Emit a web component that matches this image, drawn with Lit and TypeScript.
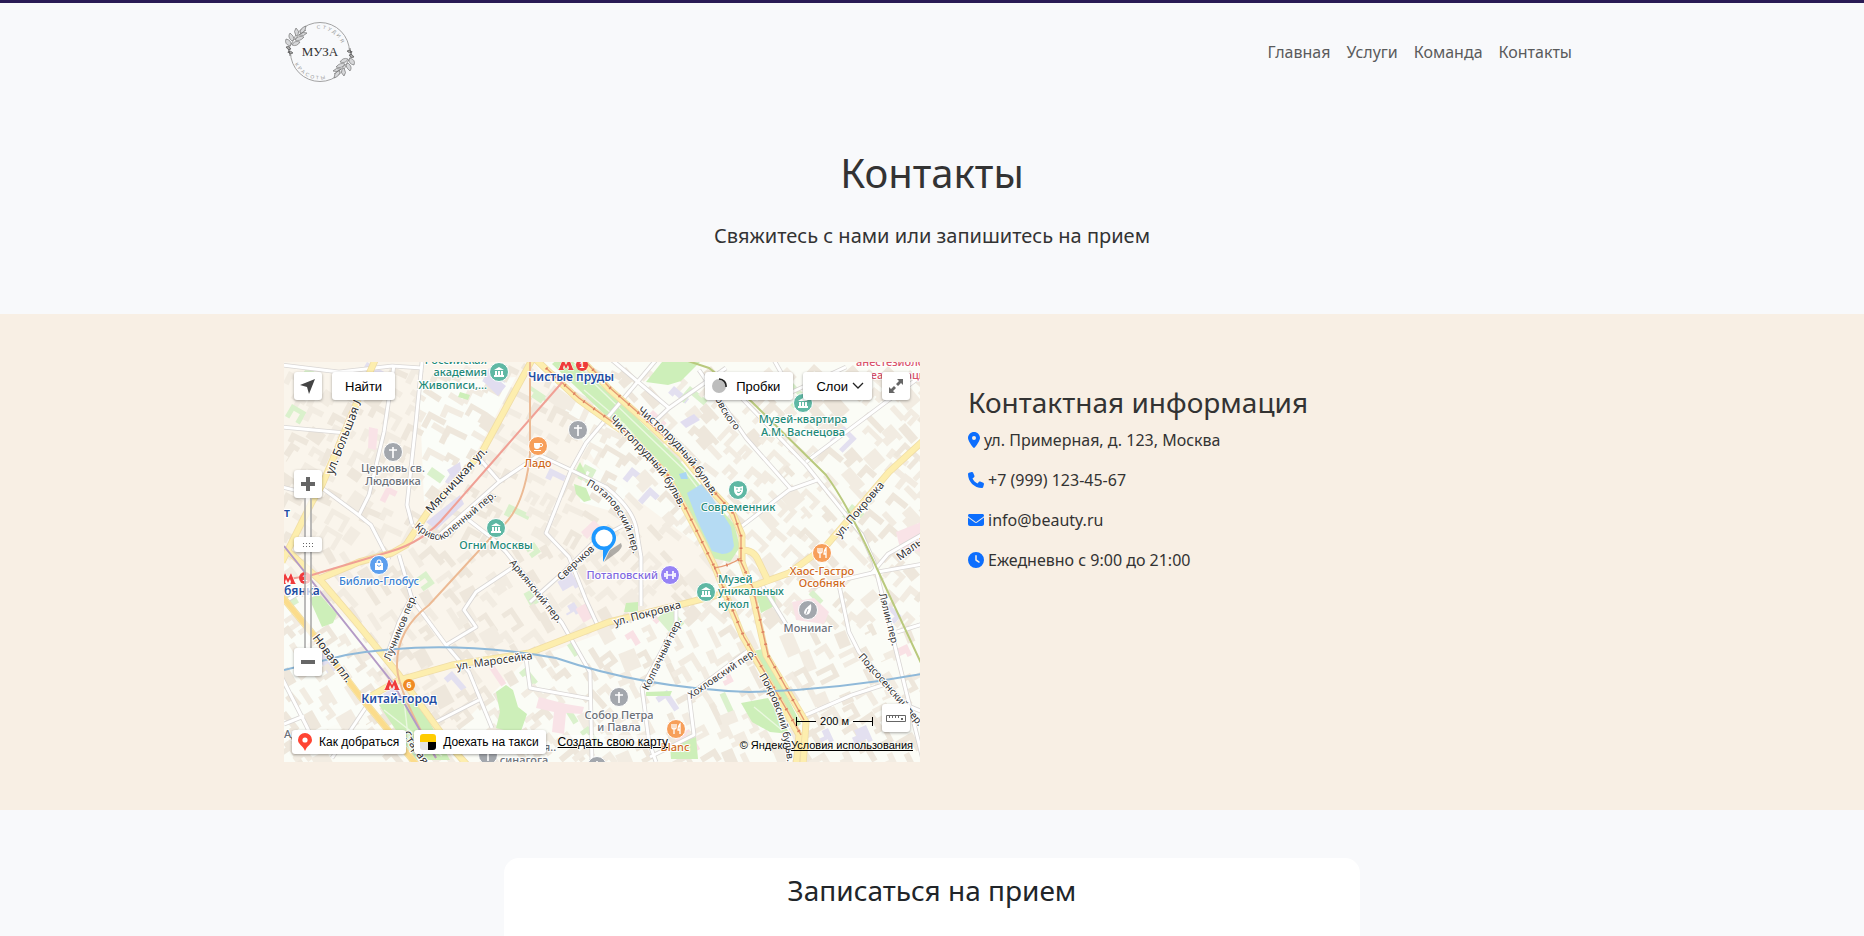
import { LitElement, html, svg, css } from "lit";
import { customElement } from "lit/decorators.js";

type Poi = {
  x: number;
  y: number;
  kind: string;
  color: string;
  ink: string;
  anchor: string;
  lines: { x: number; y: number; text: string }[];
};

const TEAL = "#5fb8a4";
const TEAL_INK = "#1f8a78";
const ORANGE = "#f79f5a";
const ORANGE_INK = "#cf6a1c";
const GREY = "#a3a7ad";
const GREY_INK = "#6b7078";

const AVENUES = [
  "M92 -4 L73 40 L38 123 L28 140 L-2 200",
  "M249 -4 L198 90 L145 148 L122 183 L108 191 L75 200 L35 217",
  "M-4 232 L32 276 L75 333 L132 402",
  "M5 190 L38 220 L72 260 L115 313 L168 386 L184 404",
  "M82 337 L115 318 L168 303 L245 291 L325 260 L395 243 L472 223 L505 211 L542 184 L605 110 L640 78",
  "M248 -6 L295 38 L348 76 L382 112 L398 141 L415 173 L430 203 L458 273 L502 350 L515 373 L512 404",
  "M292 -8 L325 27 L358 56 L398 93 L425 126 L448 150 L458 173 L458 200 L467 226 L482 293 L522 360 L519 404",
  "M458 188 Q470 188 474 198 L485 221",
];

const TRAMS = [
  "M262 6 L295 36 L348 74 L382 110 L400 143 L430 204 L460 275 L504 350 L517 373",
  "M300 -2 L325 25 L358 54 L398 91 L425 124 L450 152 L457 174 L457 200 L469 226 L484 293 L520 358",
  "M430 206 Q445 204 457 196",
];

const STREETS = [
  "M138 0 L132 60 L123 143 L128 162",
  "M110 3 L100 70 L85 133 L75 153",
  "M-2 3 L55 10 L108 4 L138 6",
  "M-2 65 L62 71",
  "M38 126 L72 151 L87 163 L105 198",
  "M-2 125 L34 134",
  "M128 163 L152 176 L215 120 L255 93 L287 108 L322 125 Q348 146 352 165 L357 195 L357 244",
  "M195 96 L215 119",
  "M182 156 L208 176 L222 190 L258 235 L278 261 L306 310 L308 400",
  "M372 -2 L302 81 L287 108 L262 171 L285 195 L302 238 L313 262",
  "M246 240 L282 208 L312 178 L342 162",
  "M115 193 L128 237 L162 283 L185 310 L208 366",
  "M162 283 L192 265 L180 248 L192 230 L228 206",
  "M242 296 L246 326 L307 337",
  "M102 296 L115 260 L128 234",
  "M328 -2 L385 46 L368 62",
  "M442 6 L385 46",
  "M415 8 L462 76 L507 127",
  "M448 26 L522 103 L562 153 L578 173 L590 200 L605 260 L639 398",
  "M458 164 L505 128 L533 118",
  "M522 100 L602 40 L640 12",
  "M490 -2 L508 30 L562 5",
  "M528 225 L588 211 L639 202",
  "M588 211 L604 192 L639 172",
  "M555 223 L565 270 L575 290 L622 343 L639 350",
  "M613 270 L639 262",
  "M478 223 L502 262",
  "M515 356 L568 333 L605 321",
  "M392 243 L392 262 L358 326 L365 380 L372 400",
  "M465 288 L405 333 L410 373 L366 395",
  "M-2 316 L22 363 L30 380",
  "M48 396 L82 345",
  "M152 360 L195 338",
  "M0 240 L30 222",
  "M0 362 L20 354",
];

const PARKS = [
  "M280 -8 L315 22 L355 58 L395 98 L425 134 L450 162 L456 185 L446 200 L428 196 L400 142 L378 106 L345 72 L318 50 L268 2 Z",
  "M95 343 L122 333 L142 353 L166 398 L132 398 Z",
  "M25 236 L36 233 L53 252 L49 261 L38 265 Z",
  "M469 289 L479 287 L517 362 L511 366 Z",
  "M457 341 L484 336 L506 372 L486 370 L468 360 Z",
  "M212 330 L222 323 L229 328 L234 345 L243 352 L236 372 L212 366 L216 350 Z",
  "M362 20 L378 0 L416 0 L397 19 L384 23 Z",
  "M472 231 L489 226 L492 243 L477 251 Z",
  "M386 384 L412 375 L414 397 L387 397 Z",
  "M290 122 L302 126 L307 138 L300 140 L292 132 Z",
  "M292 108 L296 100 L302 112 L300 116 Z",
  "M362 330 L388 329 L386 334 L362 334 Z",
  "M342 241 L354 240 L354 250 L340 250 Z",
  "M176 30 L186 33 L184 38 L174 35 Z",
];

const STREET_NAMES = [
  { id: "s1", d: "M49 113 L84 24", text: "ул. Большая Лу", size: 12 },
  { id: "s2", d: "M147 152 L216 76", text: "Мясницкая ул.", size: 12 },
  { id: "s3", d: "M130 165 Q150 184 163 175 L232 118", text: "Кривоколенный пер.", size: 10 },
  { id: "s4", d: "M325 58 L366 100 Q388 125 408 172", text: "Чистопрудный бульв.", size: 11 },
  { id: "s5", d: "M353 50 Q402 86 444 160", text: "Чистопрудный бульв.", size: 11 },
  { id: "s6", d: "M422 20 L440 54 L474 98", text: "Жуковского", size: 10 },
  { id: "s7", d: "M302 123 Q344 144 352 210", text: "Потаповский пер.", size: 10 },
  { id: "s8", d: "M277 219 L330 170", text: "Сверчков", size: 10 },
  { id: "s9", d: "M225 201 L288 279", text: "Армянский пер.", size: 10 },
  { id: "s10", d: "M106 299 L142 211", text: "Лучников пер.", size: 10 },
  { id: "s11", d: "M173 308 L270 294", text: "ул. Маросейка", size: 11 },
  { id: "s12", d: "M331 264 L420 240", text: "ул. Покровка", size: 11 },
  { id: "s13", d: "M556 176 L618 103", text: "ул. Покровка", size: 11 },
  { id: "s14", d: "M616 199 L670 158", text: "Малый", size: 11 },
  { id: "s15", d: "M28 276 L76 339", text: "Новая пл.", size: 12 },
  { id: "s16", d: "M364 329 L406 242", text: "Колпачный пер.", size: 10 },
  { id: "s17", d: "M407 337 L490 280", text: "Хохловский пер.", size: 10 },
  { id: "s18", d: "M475 314 Q502 356 505 420", text: "Покровский бульв.", size: 10 },
  { id: "s19", d: "M574 295 L626 354 L650 384", text: "Подсосенский пер.", size: 10 },
  { id: "s20", d: "M595 232 L614 308", text: "Лялин пер.", size: 10 },
  { id: "s21", d: "M118 372 L156 428", text: "Старая", size: 11 },
];

const POIS: Poi[] = [
  { x: 215, y: 10, kind: "museum", color: TEAL, ink: TEAL_INK, anchor: "end", lines: [
    { x: 203, y: 2, text: "Российская" }, { x: 203, y: 14, text: "академия" }, { x: 203, y: 27, text: "Живописи,..." } ] },
  { x: 254, y: 84, kind: "cafe", color: ORANGE, ink: ORANGE_INK, anchor: "middle", lines: [{ x: 254, y: 105, text: "Ладо" }] },
  { x: 294, y: 68, kind: "cross", color: GREY, ink: GREY_INK, anchor: "middle", lines: [] },
  { x: 109, y: 90, kind: "cross", color: GREY, ink: GREY_INK, anchor: "middle", lines: [
    { x: 109, y: 110, text: "Церковь св." }, { x: 109, y: 123, text: "Людовика" } ] },
  { x: 212, y: 166, kind: "museum", color: TEAL, ink: TEAL_INK, anchor: "middle", lines: [{ x: 212, y: 187, text: "Огни Москвы" }] },
  { x: 454, y: 128, kind: "mask", color: TEAL, ink: TEAL_INK, anchor: "middle", lines: [{ x: 454, y: 149, text: "Современник" }] },
  { x: 519, y: 41, kind: "museum", color: TEAL, ink: TEAL_INK, anchor: "middle", lines: [
    { x: 519, y: 61, text: "Музей-квартира" }, { x: 519, y: 74, text: "А.М. Васнецова" } ] },
  { x: 95, y: 203, kind: "bag", color: "#5c9fee", ink: "#3a7fd0", anchor: "middle", lines: [{ x: 95, y: 223, text: "Библио-Глобус" }] },
  { x: 386, y: 213, kind: "gym", color: "#9683f5", ink: "#8169e0", anchor: "end", lines: [{ x: 374, y: 217, text: "Потаповский" }] },
  { x: 422, y: 230, kind: "museum", color: TEAL, ink: TEAL_INK, anchor: "start", lines: [
    { x: 434, y: 221, text: "Музей" }, { x: 434, y: 233, text: "уникальных" }, { x: 434, y: 246, text: "кукол" } ] },
  { x: 538, y: 191, kind: "food", color: ORANGE, ink: ORANGE_INK, anchor: "middle", lines: [
    { x: 538, y: 213, text: "Хаос-Гастро" }, { x: 538, y: 225, text: "Особняк" } ] },
  { x: 524, y: 248, kind: "drop", color: GREY, ink: GREY_INK, anchor: "middle", lines: [{ x: 524, y: 270, text: "Монииаг" }] },
  { x: 335, y: 335, kind: "cross", color: GREY, ink: GREY_INK, anchor: "middle", lines: [
    { x: 335, y: 357, text: "Собор Петра" }, { x: 335, y: 369, text: "и Павла" } ] },
  { x: 392, y: 367, kind: "food", color: ORANGE, ink: ORANGE_INK, anchor: "middle", lines: [{ x: 391, y: 389, text: "Blanc" }] },
  { x: 204, y: 393, kind: "cross", color: GREY, ink: GREY_INK, anchor: "middle", lines: [
    { x: 240, y: 389, text: "Хоральная.." }, { x: 240, y: 402, text: "синагога" } ] },
  { x: 313, y: 404, kind: "cross", color: GREY, ink: GREY_INK, anchor: "middle", lines: [] },
];

const glyph = (kind: string) => {
  switch (kind) {
    case "museum":
      return svg`<path d="M-5 -2 L0 -5 L5 -2 Z M-4 -1 H-2 V3 H-4 Z M-1 -1 H1 V3 H-1 Z M2 -1 H4 V3 H2 Z M-5 3 H5 V5 H-5 Z" fill="#fff"/>`;
    case "cross":
      return svg`<path d="M0 -5 V6 M-4 -2 H4" stroke="#fff" stroke-width="1.6" fill="none"/>`;
    case "cafe":
      return svg`<path d="M-4 -3 H2 V0 Q2 3 -1 3 Q-4 3 -4 0 Z M-4 4 H3 V5 H-4 Z" fill="#fff"/><circle cx="3" cy="-1" r="1.6" stroke="#fff" fill="none"/>`;
    case "food":
      return svg`<path d="M-4 -5 V-1 Q-4 0 -2 0 V5 M0 -5 V-1 Q0 0 -2 0 M-2 -5 V0 M4 5 V-5 Q2 -3 2 1 H4" stroke="#fff" stroke-width="1.3" fill="none"/>`;
    case "bag":
      return svg`<path d="M-4 -2 H4 V5 H-4 Z" fill="#fff"/><path d="M-2 -2 Q-2 -5 0 -5 Q2 -5 2 -2" stroke="#fff" stroke-width="1.2" fill="none"/><path d="M-2 0 Q0 3 2 0" stroke="#5c9fee" fill="none"/>`;
    case "gym":
      return svg`<path d="M-5 -2 V2 M-3 -4 V4 M3 -4 V4 M5 -2 V2 M-3 0 H3" stroke="#fff" stroke-width="1.7" fill="none"/>`;
    case "mask":
      return svg`<path d="M-4 -4 Q0 -2 5 -4 V1 Q4 5 0 6 Q-4 4 -4 0 Z" fill="#fff"/><path d="M-2 -1 H0 M2 -1 H4 M-1 2 Q1 4 3 1" stroke="#5fb8a4" fill="none"/>`;
    default:
      return svg`<path d="M3 -6 Q4 0 1 4 Q-3 6 -4 3 Q-4 -1 3 -6 Z" fill="#fff"/><path d="M0 -1 L-2 4" stroke="#a3a7ad"/>`;
  }
};

/* Building footprints scattered on a loose grid, turned with the street pattern. */
const buildFootprints = () => {
  let seed = 20417;
  const rnd = () => {
    seed = (seed * 1103515245 + 12345) % 2147483648;
    return seed / 2147483648;
  };
  const out: { x: number; y: number; r: number; d: string; fill: string }[] = [];
  for (let gy = 0; gy < 410; gy += 20) {
    for (let gx = 0; gx < 650; gx += 20) {
      const keep = rnd();
      const x = Math.round(gx + rnd() * 11);
      const y = Math.round(gy + rnd() * 11);
      const w = Math.round(11 + rnd() * 13);
      const h = Math.round(9 + rnd() * 11);
      const t = rnd();
      const tone = rnd();
      if (keep < 0.06) continue;
      const base = x < 330 ? (y < 180 ? 30 : 55) : y < 250 ? 44 : 62;
      const d =
        t < 0.35
          ? `M0 0H${w}V6H6V${h}H0Z`
          : t < 0.6
            ? `M0 0H${w}V${h}H${w - 5}V5H5V${h}H0Z`
            : t < 0.75
              ? `M0 0H${w}V6H0Z`
              : t < 0.88
                ? `M0 0H${w}V5H${w - 4}V${h}H6V${h - 5}H0Z`
                : `M0 0H${w}V${h - 2}H0Z`;
      const fill = tone < 0.03 ? "#e3e0f0" : tone < 0.045 ? "#f9e1e5" : tone < 0.07 ? "#daf1cc" : tone < 0.5 ? "#eee7dc" : "#f2ece2";
      out.push({ x, y, r: base + Math.round((t - 0.5) * 12), d, fill });
    }
  }
  return out;
};
const FOOTPRINTS = buildFootprints();

const metro = (x: number, y: number) =>
  svg`<path transform="translate(${x} ${y})" d="M-8 5 L-7 4 L-3 -6 L0 0 L3 -6 L7 4 L8 5 H2 L3 3 L2 0 L0 4 L-2 0 L-3 3 L-2 5 Z" fill="#ef3b3b" stroke="#fff" stroke-width="1" paint-order="stroke"/>`;

@customElement("city-map")
export class CityMap extends LitElement {
  static styles = css`
    :host {
      display: block;
      position: relative;
      height: 400px;
      overflow: hidden;
      font-family: "Liberation Sans", Arial, sans-serif;
      color: #000;
    }
    .canvas {
      display: block;
      width: 100%;
      height: 100%;
    }
    .street {
      font-family: "Noto Sans", sans-serif;
      fill: #333;
      stroke: #fff;
      stroke-width: 2px;
      paint-order: stroke;
    }
    .place {
      font-family: "Noto Sans", sans-serif;
      font-size: 11px;
      font-weight: 500;
      stroke: #fff;
      stroke-width: 2px;
      paint-order: stroke;
    }
    .station {
      font-family: "Noto Sans", sans-serif;
      font-size: 12px;
      font-weight: 600;
      fill: #1f4ea3;
      stroke: #fff;
      stroke-width: 2px;
      paint-order: stroke;
    }
    .line-number {
      font-size: 9px;
      font-weight: 700;
      fill: #fff;
    }
    .overlay {
      position: absolute;
      inset: 0;
      display: flex;
      flex-direction: column;
      padding: 10px 10px 8px;
    }
    .bar {
      display: flex;
      justify-content: space-between;
    }
    .group {
      display: flex;
      gap: 10px;
    }
    button {
      display: flex;
      align-items: center;
      justify-content: center;
      height: 28px;
      margin: 0;
      padding: 0 13px;
      border: 0;
      border-radius: 3px;
      background: #fff;
      box-shadow: 0 1px 3px rgba(0, 0, 0, 0.35);
      font: 13px "Liberation Sans", Arial, sans-serif;
      color: #000;
      cursor: pointer;
      white-space: nowrap;
    }
    .square {
      width: 28px;
      padding: 0;
    }
    .traffic {
      gap: 9px;
      padding: 0 13px 0 6px;
    }
    .layers {
      gap: 4px;
      padding: 0 8px 0 13px;
    }
    .zoom {
      display: flex;
      flex-direction: column;
      align-items: center;
      width: 28px;
      height: 206px;
      margin-top: 70px;
    }
    .track {
      display: flex;
      justify-content: center;
      align-items: flex-start;
      flex: 1;
      width: 8px;
      padding-top: 39px;
      box-sizing: border-box;
      border: solid rgba(120, 120, 120, 0.5);
      border-width: 0 2px;
      background: rgba(255, 255, 255, 0.7);
    }
    .handle {
      flex: none;
      width: 28px;
      height: 15px;
      padding: 0;
    }
    .bottom {
      position: absolute;
      left: 8px;
      right: 7px;
      bottom: 8px;
      display: flex;
      align-items: center;
      justify-content: space-between;
    }
    .actions {
      display: flex;
      align-items: center;
      gap: 8px;
    }
    .actions button {
      height: 24px;
      gap: 7px;
      padding: 0 7px 0 6px;
      font-size: 12px;
    }
    a {
      color: #000;
    }
    .own {
      margin-left: 4px;
      font-size: 12px;
      line-height: 14px;
      background: rgba(255, 255, 255, 0.5);
    }
    .legal {
      padding-top: 6px;
      font-size: 11px;
      line-height: 13px;
    }
    .measure {
      position: absolute;
      right: 10px;
      bottom: 30px;
      display: flex;
      align-items: center;
      gap: 9px;
    }
    .scale {
      display: flex;
      align-items: center;
      gap: 4px;
      margin-top: 6px;
      font-size: 11px;
      line-height: 12px;
    }
  `;

  render() {
    return html`
      <svg class="canvas" viewBox="0 0 636 400" preserveAspectRatio="xMidYMid slice" role="img" aria-label="Карта">
        <rect width="636" height="400" fill="#fbfcf6" />
        <path d="M0 0H250L330 130L250 290L120 310L0 200Z" fill="#faf5ec" />
        <path d="M150 200L330 120L450 210L400 240L240 300L160 380L90 320Z" fill="#faf5ec" />
        <path d="M135 20L232 15L190 95L140 140Z M300 95L345 130L330 150L296 140Z M0 235L50 290L90 350L0 380Z" fill="#fbfdf8" />
        ${FOOTPRINTS.map(
          (b) => svg`<path d=${b.d} fill=${b.fill} transform="translate(${b.x} ${b.y}) rotate(${b.r})"/>`,
        )}
        <path d="M142 160L176 133L180 142L152 168Z M205 10L222 24L214 34L200 20Z M163 108L176 100L178 112L168 116Z M396 60L410 52L416 58L402 66Z" fill="#e1ddf0" />
        <path d="M508 240L530 236L545 250L540 262L512 258Z M255 335L282 342L300 345L298 352L282 351L280 372L268 370L270 350L252 346Z M612 170L637 160V190L616 186Z M85 65L94 67L92 88L84 86Z M297 170L310 158L316 164L303 177Z" fill="#f9e3e7" />
        ${PARKS.map((d) => svg`<path d=${d} fill="#cdefb9"/>`)}
        <path d="M290 2L350 60L400 108L432 150L446 188 M300 28L340 62L390 118 M100 348L158 394 M120 338L126 392 M470 345L498 368" fill="none" stroke="#eaf8df" stroke-width="1.4" />
        <path d="M403 131L419 121L426 132L447 165L450 184Q448 192 438 192L428 189L414 160Z" fill="#b5dbf3" />
        <path d="M395 112L402 110L404 117L397 117Z" fill="#a9d6f2" />
        ${STREETS.map((d) => svg`<path d=${d} fill="none" stroke="#d9d6d4" stroke-width="4.6" stroke-linejoin="round"/>`)}
        ${STREETS.map((d) => svg`<path d=${d} fill="none" stroke="#fff" stroke-width="3" stroke-linejoin="round"/>`)}
        ${AVENUES.map((d) => svg`<path d=${d} fill="none" stroke="#f0dda6" stroke-width="7" stroke-linejoin="round"/>`)}
        ${AVENUES.map((d) => svg`<path d=${d} fill="none" stroke="#fdeeae" stroke-width="5.4" stroke-linejoin="round"/>`)}
        <path d="M-4 232L32 276L75 333L132 402" fill="none" stroke="#fbdc8c" stroke-width="5" />
        ${TRAMS.map(
          (d) => svg`<path d=${d} fill="none" stroke="#e59a72" stroke-width="1.4"/>
            <path d=${d} fill="none" stroke="#dd7f60" stroke-width="3" stroke-dasharray="1.5 11"/>`,
        )}
        <path d="M281 17L212 96L162 153Q140 180 105 190L28 213L0 218" fill="none" stroke="#f0a095" stroke-width="2" />
        <path d="M246 0V93Q240 150 212 170L145 243Q112 268 113 305Q114 330 152 396" fill="none" stroke="#ecba94" stroke-width="2" />
        <path d="M0 184L108 320L152 396" fill="none" stroke="#b49bc6" stroke-width="2" />
        <path d="M0 308L62 293Q160 276 272 296Q360 326 465 330Q550 328 637 312" fill="none" stroke="#8fb9d9" stroke-width="2" />
        <path d="M398 -3L425 6L468 40L542 113Q562 140 588 196L637 301" fill="none" stroke="#b9c97d" stroke-width="2" />
        ${STREET_NAMES.map(
          (s) => svg`<path id=${s.id} d=${s.d} fill="none"/>
            <text class="street" font-size=${s.size}><textPath href="#${s.id}">${s.text}</textPath></text>`,
        )}
        ${POIS.map(
          (p) => svg`<g transform="translate(${p.x} ${p.y})"><circle r="9.5" fill=${p.color} stroke="#fff" stroke-width="1"/>${glyph(p.kind)}</g>
            ${p.lines.map((l) => svg`<text class="place" x=${l.x} y=${l.y} fill=${p.ink} text-anchor=${p.anchor}>${l.text}</text>`)}`,
        )}
        <text class="place" x="572" y="4" fill="#d9536b">анестезиологии</text>
        <text class="place" x="580" y="17" fill="#d9536b">реанимации</text>
        <text class="place" x="0" y="376" fill="#6b7078">Ад</text>
        <text class="station" x="0" y="155">т</text>
        ${metro(4, 217)} ${metro(108, 323)} ${metro(282, 3)}
        <circle cx="21" cy="216" r="6" fill="#ef3b3b" />
        <text class="line-number" x="21" y="219" text-anchor="middle">1</text>
        <circle cx="298" cy="3" r="6" fill="#ef3b3b" />
        <text class="line-number" x="298" y="6" text-anchor="middle">1</text>
        <circle cx="125" cy="323" r="6" fill="#f08a24" />
        <text class="line-number" x="125" y="326" text-anchor="middle">6</text>
        <text class="station" x="0" y="233">бянка</text>
        <text class="station" x="115" y="341" text-anchor="middle">Китай-город</text>
        <text class="station" x="287" y="19" text-anchor="middle">Чистые пруды</text>
        <path d="M320 200L326 188L337 181Q340 186 331 192Z" fill="#555" opacity="0.45" />
        <path d="M320 164a12 12 0 0 1 12 12c0 7 -6 10 -8 14l-5 10l0 -12a12 12 0 0 1 1 -24Z" fill="#1e98ff" />
        <circle cx="320" cy="176" r="8.6" fill="#fff" />
      </svg>

      <div class="overlay">
        <div class="bar">
          <div class="group">
            <button class="square" aria-label="Моё местоположение">
              <svg width="16" height="16" viewBox="0 0 16 16"><path d="M15 1L0 7L7 9L9 16Z" fill="#444" /></svg>
            </button>
            <button>Найти</button>
          </div>
          <div class="group">
            <button class="traffic">
              <svg width="16" height="16" viewBox="0 0 16 16">
                <circle cx="8" cy="8" r="7" fill="#bdbdbd" />
                <path d="M8 1A7 7 0 0 1 15 9" fill="none" stroke="#222" stroke-width="1.6" />
              </svg>
              Пробки
            </button>
            <button class="layers">
              Слои
              <svg width="12" height="8" viewBox="0 0 12 8"><path d="M1 1L6 6L11 1" fill="none" stroke="#222" stroke-width="1.3" /></svg>
            </button>
            <button class="square" aria-label="Развернуть">
              <svg width="16" height="16" viewBox="0 0 16 16">
                <path d="M15 1V7L13 5L10 8L8 6L11 3L9 1Z M1 15V9L3 11L6 8L8 10L5 13L7 15Z" fill="#666" />
              </svg>
            </button>
          </div>
        </div>
        <div class="zoom">
          <button class="square" aria-label="Приблизить">
            <svg width="14" height="14" viewBox="0 0 14 14"><path d="M5 0H9V5H14V9H9V14H5V9H0V5H5Z" fill="#666" /></svg>
          </button>
          <div class="track">
            <button class="handle" aria-label="Масштаб">
              <svg width="10" height="4" viewBox="0 0 10 4">
                <path d="M0 0H1V1H0Z M3 0H4V1H3Z M6 0H7V1H6Z M9 0H10V1H9Z M0 3H1V4H0Z M3 3H4V4H3Z M6 3H7V4H6Z M9 3H10V4H9Z" fill="#666" />
              </svg>
            </button>
          </div>
          <button class="square" aria-label="Отдалить">
            <svg width="14" height="4" viewBox="0 0 14 4"><path d="M0 0H14V4H0Z" fill="#666" /></svg>
          </button>
        </div>
      </div>

      <div class="measure">
        <div class="scale">
          <svg width="20" height="9" viewBox="0 0 20 9"><path d="M0.5 0V9M0 4.5H20" stroke="#000" fill="none" /></svg>
          200 м
          <svg width="20" height="9" viewBox="0 0 20 9"><path d="M19.5 0V9M0 4.5H20" stroke="#000" fill="none" /></svg>
        </div>
        <button class="square" aria-label="Линейка">
          <svg width="20" height="7" viewBox="0 0 20 7">
            <path d="M0.5 0.5H19.5V6.5H0.5Z M3.5 0V3M6.5 0V3M9.5 0V3M12.5 0V3" fill="none" stroke="#666" />
            <path d="M15 3H17V5H15Z" fill="#666" />
          </svg>
        </button>
      </div>

      <div class="bottom">
        <div class="actions">
          <button>
            <svg width="14" height="18" viewBox="0 0 14 18">
              <path d="M7 0A7 7 0 0 1 14 7C14 11 9 13 8 16L7 18L6 16C5 13 0 11 0 7A7 7 0 0 1 7 0Z" fill="#ff4433" />
              <circle cx="7" cy="7" r="2.6" fill="#fff" />
            </svg>
            Как добраться
          </button>
          <button>
            <svg width="16" height="16" viewBox="0 0 16 16">
              <path d="M3 0H13Q16 0 16 3V8H0V3Q0 0 3 0Z" fill="#ffcc00" />
              <path d="M0 8H8V16H3Q0 16 0 13Z" fill="#e4e4e4" />
              <path d="M8 8H16V13Q16 16 13 16H8Z" fill="#000" />
            </svg>
            Доехать на такси
          </button>
          <a class="own" href="#map">Создать свою карту</a>
        </div>
        <div class="legal">© Яндекс <a href="#terms">Условия использования</a></div>
      </div>
    `;
  }
}

const FA = {
  pin: { w: 384, d: "M215.7 499.2C267 435 384 279.4 384 192C384 86 298 0 192 0S0 86 0 192c0 87.4 117 243 168.3 307.2c12.3 15.3 35.1 15.3 47.4 0zM192 128a64 64 0 1 1 0 128 64 64 0 1 1 0-128z" },
  phone: { w: 512, d: "M164.9 24.6c-7.7-18.6-28-28.5-47.4-23.2l-88 24C12.1 30.2 0 46 0 64C0 311.4 200.6 512 448 512c18 0 33.8-12.1 38.6-29.5l24-88c5.3-19.4-4.6-39.7-23.2-47.4l-96-40c-16.3-6.8-35.2-2.1-46.3 11.6L304.7 368C234.3 334.7 177.3 277.7 144 207.3L193.3 167c13.7-11.2 18.4-30 11.6-46.3l-40-96z" },
  mail: { w: 512, d: "M48 64C21.5 64 0 85.5 0 112c0 15.1 7.1 29.3 19.2 38.4L236.8 313.6c11.4 8.5 27 8.5 38.4 0L492.8 150.4c12.1-9.1 19.2-23.3 19.2-38.4c0-26.5-21.5-48-48-48H48zM0 176V384c0 35.3 28.7 64 64 64H448c35.3 0 64-28.7 64-64V176L294.4 339.2c-22.8 17.1-54 17.1-76.8 0L0 176z" },
  clock: { w: 512, d: "M256 0a256 256 0 1 1 0 512A256 256 0 1 1 256 0zM232 120V256c0 8 4 15.5 10.7 20l96 64c11 7.4 25.9 4.4 33.3-6.7s4.4-25.9-6.7-33.3L280 243.2V120c0-13.3-10.7-24-24-24s-24 10.7-24 24z" },
};

const CONTACTS = [
  { icon: FA.pin, text: "ул. Примерная, д. 123, Москва" },
  { icon: FA.phone, text: "+7 (999) 123-45-67" },
  { icon: FA.mail, text: "info@beauty.ru" },
  { icon: FA.clock, text: "Ежедневно с 9:00 до 21:00" },
];

const NAV = ["Главная", "Услуги", "Команда", "Контакты"];

const sprig = svg`
  <path d="M2 28Q4 14 20 5" fill="none" stroke="#666" stroke-width="0.7"/>
  <path d="M4 21Q-2 19 0 14Q5 15 5 19Z M6 16Q1 12 4 8Q8 11 8 14Z M10 11Q7 6 10 3Q14 6 12 10Z M14 8Q14 3 20 1Q20 6 16 8Z M6 20Q8 15 14 17Q11 22 6 20Z M9 15Q12 10 18 12Q14 17 9 15Z M13 10Q17 6 21 8Q18 12 13 10Z" fill="#d6d7d9" stroke="#666" stroke-width="0.6"/>
  <path d="M0 22Q3 20 5 24Q2 26 0 22Z M2 27Q5 25 7 28Q4 30 2 27M3 24L4 31" fill="#aaa" stroke="#555" stroke-width="0.7"/>`;

@customElement("app-root")
export class AppRoot extends LitElement {
  static styles = css`
    :host {
      display: flex;
      flex-direction: column;
      min-height: 100vh;
      background: #f8f9fb;
      font: 16px/24px "Noto Sans", sans-serif;
      color: #333;
    }
    .container {
      width: 100%;
      max-width: 1320px;
      margin: 0 auto;
      padding: 0 12px;
      box-sizing: border-box;
    }
    .top {
      border-top: 3px solid #2a1b55;
    }
    .top .container {
      display: flex;
      align-items: center;
      justify-content: space-between;
      height: 98px;
    }
    .logo {
      display: block;
    }
    .logo svg {
      display: block;
    }
    .brand {
      font: 13px "Liberation Serif", serif;
      fill: #333;
    }
    .motto {
      font: 5px "Liberation Sans", sans-serif;
      letter-spacing: 2px;
      fill: #999;
    }
    .nav {
      display: flex;
    }
    .nav a {
      padding: 8px;
      color: #5a5b5c;
      text-decoration: none;
    }
    h1,
    h2,
    p {
      margin: 0;
      font-weight: 400;
    }
    .hero {
      padding: 48px 0 63px;
      text-align: center;
    }
    .hero h1 {
      margin-bottom: 24px;
      font-size: 40px;
      line-height: 48px;
    }
    .hero p {
      font-size: 20px;
      line-height: 30px;
    }
    .contacts {
      padding: 48px 0;
      background: #f8efe4;
    }
    .columns {
      display: grid;
      grid-template-columns: 1fr 1fr;
      gap: 24px;
    }
    .info {
      display: flex;
      flex-direction: column;
      gap: 16px;
      padding: 24px;
    }
    h2 {
      font-size: 28px;
      line-height: 32px;
    }
    .info h2 {
      margin-bottom: -6px;
    }
    .info p {
      display: flex;
      align-items: center;
      gap: 4px;
    }
    .info svg {
      height: 16px;
      fill: #0d6efd;
    }
    .booking {
      display: flex;
      flex: 1;
      padding-top: 48px;
    }
    .booking .container {
      display: flex;
      justify-content: center;
    }
    .card {
      width: 66%;
      padding: 16px;
      box-sizing: border-box;
      border-radius: 15px 15px 0 0;
      background: #fff;
      text-align: center;
      color: #212529;
    }
  `;

  render() {
    return html`
      <header class="top">
        <div class="container">
          <a class="logo" href="#home" aria-label="Муза">
            <svg width="72" height="64" viewBox="0 0 72 64">
              <circle cx="36" cy="32" r="29.5" fill="none" stroke="#999" stroke-width="0.9" />
              <g transform="translate(2 5)"><rect x="-1" y="4" width="9" height="24" fill="#f8f9fb" />${sprig}</g>
              <g transform="translate(70 59) rotate(180)"><rect x="-1" y="4" width="9" height="24" fill="#f8f9fb" />${sprig}</g>
              <path id="arc-top" d="M33 9A23 23 0 0 1 59 32" fill="none" />
              <path id="arc-bottom" d="M11 44A27 27 0 0 0 44 58" fill="none" />
              <text class="motto"><textPath href="#arc-top">СТУДИЯ</textPath></text>
              <text class="motto"><textPath href="#arc-bottom">КРАСОТЫ</textPath></text>
              <text class="brand" x="36" y="36" text-anchor="middle">МУЗА</text>
            </svg>
          </a>
          <nav class="nav">${NAV.map((n) => html`<a href="#">${n}</a>`)}</nav>
        </div>
      </header>

      <section class="hero">
        <div class="container">
          <h1>Контакты</h1>
          <p>Свяжитесь с нами или запишитесь на прием</p>
        </div>
      </section>

      <section class="contacts">
        <div class="container columns">
          <city-map></city-map>
          <div class="info">
            <h2>Контактная информация</h2>
            ${CONTACTS.map(
              (c) => html`<p>
                <svg viewBox="0 0 ${c.icon.w} 512" aria-hidden="true"><path d=${c.icon.d} /></svg>
                <span>${c.text}</span>
              </p>`,
            )}
          </div>
        </div>
      </section>

      <section class="booking">
        <div class="container">
          <div class="card"><h2>Записаться на прием</h2></div>
        </div>
      </section>
    `;
  }
}
